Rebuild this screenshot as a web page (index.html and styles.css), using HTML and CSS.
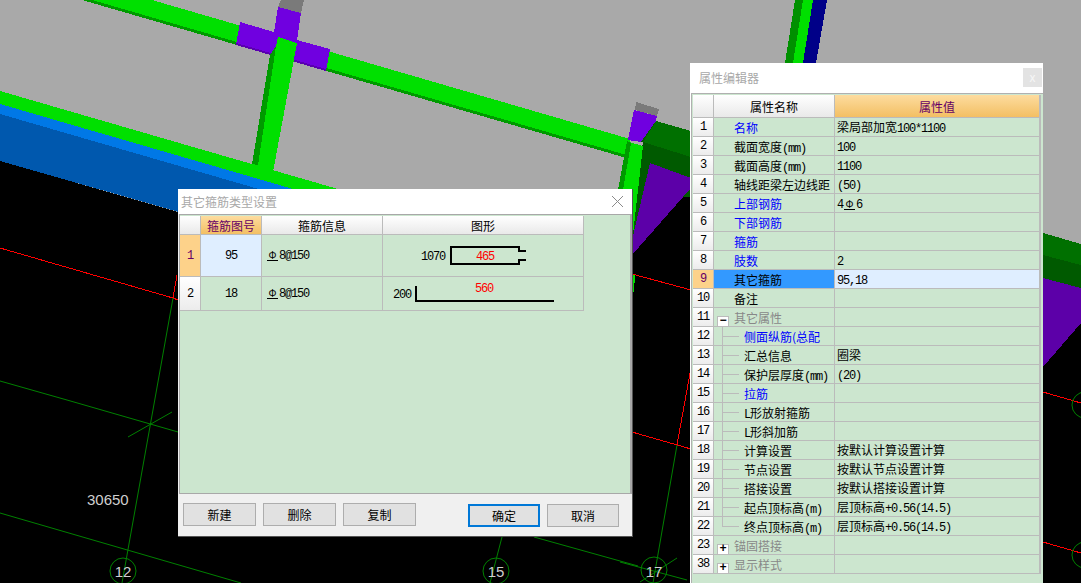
FILE: index.html
```html
<!doctype html>
<html lang="zh-CN">
<head>
  <meta charset="UTF-8">
  <title>属性编辑器</title>
  <link rel="stylesheet" href="styles.css">
</head>
<body>
  <!-- 3D model and axis lines behind the windows -->
  <svg class="scene" viewBox="0 0 1081 583" width="1081" height="583">
    <rect width="1081" height="583" fill="#a9a9a9"/>
    <polygon fill="#000" points="0,161 300,247 632,255 683,197 691,197 1043,367 1081,323 1081,583 0,583"/>
    <polygon fill="#0058ae" points="0,104 400,220 400,275 0,161"/>
    <polygon fill="#0078e6" points="0,104 400,220 400,230 0,114"/>
    <polygon fill="#00e000" points="0,91 400,207 400,220 0,104"/>
    <polygon fill="#00e000" points="152,0 630,139 630,159 82,0"/>
    <polygon fill="#009a00" points="82,0 630,159 630,156 92,0"/>
    <polygon fill="#7a7a7a" points="281,0 304,0 301,13 278,7"/>
    <polygon fill="#7000e0" points="278,7 301,13 297,40 330,49 326,71 236,45 240,22 274,32"/>
    <polygon fill="#5a00b0" points="236,43 326,69 326,71 236,45"/>
    <polygon fill="#00e000" points="278,37 297,43 273,172 252,165"/>
    <polygon fill="#009a00" points="270,55 276,46 258,165 252,164"/>
    <polygon fill="#00e000" points="632,274 635,275 634,292 632,292"/>
    <polygon fill="#009000" points="795,0 803,0 793,63 785,63"/>
    <polygon fill="#00e000" points="803,0 813,0 803,63 793,63"/>
    <polygon fill="#000088" points="813,0 827,0 816,63 803,63"/>
    <polygon fill="#7a7a7a" points="636,102 659,109 657,116 635,110"/>
    <polygon fill="#7000e0" points="634,110 657,116 656,121 641,142 628,140"/>
    <polygon fill="#007000" points="656,121 691,131 691,157 643,142"/>
    <polygon fill="#005a00" points="656,121 643,142 641,142"/>
    <polygon fill="#005a00" points="643,142 691,157 691,178 650,163"/>
    <polygon fill="#005a00" points="643,142 650,163 632,245 632,200"/>
    <polygon fill="#005a00" points="691,188 691,197 683,197"/>
    <polygon fill="#5c00a8" points="650,163 691,178 691,188 683,197 632,255 632,240"/>
    <polygon fill="#00e000" points="629,142 643,146 632,243 620,190"/>
    <polygon fill="#009a00" points="627,141 631,143 623,190 618,190"/>
    <polygon fill="#007000" points="1043,233 1081,244 1081,265 1043,255"/>
    <polygon fill="#005a00" points="1043,255 1081,265 1081,288 1043,278"/>
    <polygon fill="#5c00a8" points="1043,278 1081,288 1081,323 1043,367"/>
    <g class="axis-red">
      <path d="M0 248 173 298 178 300M173 298 177 275"/>
      <path d="M632 274 691 290M632 432 691 449M677 445 691 368"/>
      <path d="M1043 392 1081 403M1043 542 1081 553"/>
    </g>
    <g class="axis-green">
      <path d="M173 298 122 583M67 400 178 432M128 437 172 412M0 381 67 400M0 513 241 583"/>
      <path d="M502 537 490 583M534 537 638 566M620 562 687 580M677 445 653 583M640 582 677 558"/>
      <circle cx="123" cy="571" r="13"/>
      <circle cx="496" cy="571" r="13"/>
      <circle cx="654" cy="570" r="13"/>
      <circle cx="1085" cy="405" r="13"/>
      <circle cx="1085" cy="555" r="13"/>
    </g>
    <g class="axis-text">
      <text x="87" y="505">30650</text>
      <text x="123" y="577" text-anchor="middle">12</text>
      <text x="496" y="577" text-anchor="middle">15</text>
      <text x="654" y="577" text-anchor="middle">17</text>
    </g>
  </svg>

  <!-- stirrup type dialog -->
  <div class="dialog">
    <div class="titlebar">
      <span>其它箍筋类型设置</span>
      <svg class="close-x" width="11" height="11" viewBox="0 0 11 11"><path d="M0 0 11 11M11 0 0 11"/></svg>
    </div>
    <div class="dialog-body">
      <div class="st-row st-head">
        <div class="hcell"></div>
        <div class="hcell active">箍筋图号</div>
        <div class="hcell">箍筋信息</div>
        <div class="hcell">图形</div>
      </div>
      <div class="st-row st-tall">
        <div class="num current"><span class="m">1</span></div>
        <div class="cell center picked"><span class="m">95</span></div>
        <div class="cell"><span class="rebar">Φ</span><span class="m">8@150</span></div>
        <div class="cell shape">
          <svg width="200" height="41" viewBox="0 0 200 41">
            <text class="dim" x="38" y="25">1070</text>
            <path class="bar" d="M143 16H136V12H68V29H136V25H143"/>
            <text class="len" x="102" y="25" text-anchor="middle">465</text>
          </svg>
        </div>
      </div>
      <div class="st-row st-short">
        <div class="num"><span class="m">2</span></div>
        <div class="cell center"><span class="m">18</span></div>
        <div class="cell"><span class="rebar">Φ</span><span class="m">8@150</span></div>
        <div class="cell shape">
          <svg width="200" height="32" viewBox="0 0 200 32">
            <text class="dim" x="10" y="21">200</text>
            <path class="bar" d="M33 9V24H171"/>
            <text class="len" x="101" y="15" text-anchor="middle">560</text>
          </svg>
        </div>
      </div>
    </div>
    <div class="footer">
      <button class="btn">新建</button>
      <button class="btn">删除</button>
      <button class="btn">复制</button>
      <button class="btn btn-ok">确定</button>
      <button class="btn btn-cancel">取消</button>
    </div>
  </div>

  <!-- property editor -->
  <div class="prop-win">
    <div class="titlebar prop-title">
      <span>属性编辑器</span>
      <div class="close-box">x</div>
    </div>
    <div class="prop-body">
      <div class="row row-head">
        <div class="hcell"></div>
        <div class="hcell">属性名称</div>
        <div class="hcell active">属性值</div>
      </div>
      <div class="row"><div class="num"><span class="m">1</span></div><div class="name link">名称</div><div class="val">梁局部加宽<span class="m">100*1100</span></div></div>
      <div class="row"><div class="num"><span class="m">2</span></div><div class="name">截面宽度<span class="m">(mm)</span></div><div class="val"><span class="m">100</span></div></div>
      <div class="row"><div class="num"><span class="m">3</span></div><div class="name">截面高度<span class="m">(mm)</span></div><div class="val"><span class="m">1100</span></div></div>
      <div class="row"><div class="num"><span class="m">4</span></div><div class="name">轴线距梁左边线距</div><div class="val"><span class="m">(50)</span></div></div>
      <div class="row"><div class="num"><span class="m">5</span></div><div class="name link">上部钢筋</div><div class="val"><span class="m">4</span><span class="rebar">Φ</span><span class="m">6</span></div></div>
      <div class="row"><div class="num"><span class="m">6</span></div><div class="name link">下部钢筋</div><div class="val"></div></div>
      <div class="row"><div class="num"><span class="m">7</span></div><div class="name link">箍筋</div><div class="val"></div></div>
      <div class="row"><div class="num"><span class="m">8</span></div><div class="name link">肢数</div><div class="val"><span class="m">2</span></div></div>
      <div class="row row-current"><div class="num current"><span class="m">9</span></div><div class="name">其它箍筋</div><div class="val"><span class="m">95,18</span></div></div>
      <div class="row"><div class="num"><span class="m">10</span></div><div class="name">备注</div><div class="val"></div></div>
      <div class="row"><div class="num"><span class="m">11</span></div><div class="name group"><span class="toggle">−</span>其它属性</div><div class="val"></div></div>
      <div class="row"><div class="num"><span class="m">12</span></div><div class="name tree link">侧面纵筋(总配</div><div class="val"></div></div>
      <div class="row"><div class="num"><span class="m">13</span></div><div class="name tree">汇总信息</div><div class="val">圈梁</div></div>
      <div class="row"><div class="num"><span class="m">14</span></div><div class="name tree">保护层厚度<span class="m">(mm)</span></div><div class="val"><span class="m">(20)</span></div></div>
      <div class="row"><div class="num"><span class="m">15</span></div><div class="name tree link">拉筋</div><div class="val"></div></div>
      <div class="row"><div class="num"><span class="m">16</span></div><div class="name tree"><span class="m">L</span>形放射箍筋</div><div class="val"></div></div>
      <div class="row"><div class="num"><span class="m">17</span></div><div class="name tree"><span class="m">L</span>形斜加筋</div><div class="val"></div></div>
      <div class="row"><div class="num"><span class="m">18</span></div><div class="name tree">计算设置</div><div class="val">按默认计算设置计算</div></div>
      <div class="row"><div class="num"><span class="m">19</span></div><div class="name tree">节点设置</div><div class="val">按默认节点设置计算</div></div>
      <div class="row"><div class="num"><span class="m">20</span></div><div class="name tree">搭接设置</div><div class="val">按默认搭接设置计算</div></div>
      <div class="row"><div class="num"><span class="m">21</span></div><div class="name tree">起点顶标高<span class="m">(m)</span></div><div class="val">层顶标高<span class="m">+0.56(14.5)</span></div></div>
      <div class="row"><div class="num"><span class="m">22</span></div><div class="name tree tree-last">终点顶标高<span class="m">(m)</span></div><div class="val">层顶标高<span class="m">+0.56(14.5)</span></div></div>
      <div class="row"><div class="num"><span class="m">23</span></div><div class="name group"><span class="toggle">+</span>锚固搭接</div><div class="val"></div></div>
      <div class="row"><div class="num"><span class="m">38</span></div><div class="name group"><span class="toggle">+</span>显示样式</div><div class="val"></div></div>
    </div>
  </div>
</body>
</html>
```

FILE: styles.css
```css
body {
  position: relative;
  width: 1081px;
  height: 583px;
  margin: 0;
  overflow: hidden;
  background: #000;
  color: #000;
  font-family: "Noto Sans CJK SC", "Liberation Sans", sans-serif;
  font-size: 12px;
}

/* background drawing */
.scene {
  position: absolute;
  left: 0;
  top: 0;
  shape-rendering: crispEdges;
}
.axis-red path {
  fill: none;
  stroke: #f00;
}
.axis-green path,
.axis-green circle {
  fill: none;
  stroke: #008000;
  shape-rendering: auto;
}
.axis-text text {
  fill: #cfcfcf;
  font-family: "Liberation Sans", sans-serif;
  font-size: 15px;
}

/* latin text runs sit on a 6px grid like the CJK half width */
.m {
  font-family: "Liberation Mono", monospace;
  font-size: 12px;
  letter-spacing: -1.2px;
}
.rebar {
  display: inline-block;
  width: 11px;
  margin: 0 1px;
  border-bottom: 1px solid #000;
  font-family: "Liberation Sans", sans-serif;
  font-size: 10px;
  line-height: 9px;
  text-align: center;
}

/* shared window parts */
.titlebar {
  display: flex;
  align-items: center;
  justify-content: space-between;
  color: #a8a8a8;
}
.hcell {
  display: flex;
  align-items: center;
  justify-content: center;
  border-right: 1px solid #bbb;
  border-bottom: 1px solid #bbb;
  background: linear-gradient(#fff, #e9e9e9);
}
.hcell.active {
  background: linear-gradient(#fddc9f, #f3bf63);
  color: #660066;
}
.num {
  display: flex;
  align-items: center;
  justify-content: center;
  border-right: 1px solid #bbb;
  border-bottom: 1px solid #bbb;
  background: linear-gradient(#fff, #ececec);
}
.num.current {
  background: #fdd28a;
  color: #660066;
}

/* stirrup dialog */
.dialog {
  position: absolute;
  left: 178px;
  top: 189px;
  display: flex;
  flex-direction: column;
  box-sizing: border-box;
  width: 455px;
  height: 348px;
  border-right: 1px solid #555;
  border-bottom: 1px solid #555;
  background: #f0f0f0;
}
.dialog .titlebar {
  flex: none;
  height: 25px;
  padding: 0 9px 0 3px;
  background: #fff;
}
.close-x path {
  fill: none;
  stroke: #8a8a8a;
}
.dialog-body {
  flex: none;
  height: 277px;
  margin-left: 1px;
  border: 1px solid #a8a8a8;
  border-right: 2px solid #a8a8a8;
  padding-top: 1px;
  background: #cce6cf;
}
.st-row {
  display: grid;
  grid-template-columns: 21px 61px 121px 201px;
}
.st-head {
  height: 19px;
}
.st-tall {
  height: 42px;
}
.st-short {
  height: 34px;
}
.cell {
  display: flex;
  align-items: center;
  padding-left: 4px;
  border-right: 1px solid #bbb;
  border-bottom: 1px solid #bbb;
}
.cell.center {
  justify-content: center;
  padding-left: 0;
}
.cell.picked {
  background: #dfeeff;
}
.cell.shape {
  align-items: flex-start;
  padding-left: 0;
}
.shape svg {
  display: block;
}
.shape text {
  font-family: "Liberation Mono", monospace;
  font-size: 12px;
  letter-spacing: -1.2px;
}
.shape .len {
  fill: #f00;
}
.shape .bar {
  fill: none;
  stroke: #000;
  stroke-width: 2;
  shape-rendering: crispEdges;
}
.footer {
  display: flex;
  align-items: flex-start;
  gap: 7px;
  padding: 9px 0 0 5px;
}
.btn {
  box-sizing: border-box;
  width: 73px;
  height: 23px;
  padding: 0;
  border: 1px solid #adadad;
  border-radius: 0;
  background: #e1e1e1;
  color: #000;
  font: inherit;
}
.btn-ok {
  width: 72px;
  margin: 1px 0 0 45px;
  border: 2px solid #0078d7;
}
.btn-cancel {
  width: 72px;
  margin-top: 1px;
}

/* property editor */
.prop-win {
  position: absolute;
  left: 690px;
  top: 63px;
  box-sizing: border-box;
  width: 353px;
  height: 520px;
  background: #fff;
}
.prop-title {
  box-sizing: border-box;
  height: 30px;
  padding: 0 1px 2px 9px;
}
.close-box {
  width: 19px;
  height: 19px;
  background: #e3e3e3;
  color: #f6f6f6;
  line-height: 17px;
  text-align: center;
}
.prop-body {
  box-sizing: border-box;
  height: 490px;
  margin-left: 1px;
  border-top: 1px solid #b0b0b0;
  border-left: 1px solid #b0b0b0;
  padding: 1px 0 0 1px;
  background: #cce6cf;
}
.row {
  display: grid;
  grid-template-columns: 21px 121px 206px;
  height: 19px;
}
.row-head {
  height: 23px;
}
.row .hcell:last-child,
.row .val {
  border-right: 2px solid #bbb;
}
.name,
.val {
  white-space: nowrap;
  overflow: hidden;
  border-right: 1px solid #bbb;
  border-bottom: 1px solid #bbb;
}
.name {
  padding-left: 20px;
  line-height: 20px;
}
.val {
  padding-left: 2px;
  line-height: 18px;
}
.link {
  color: #00f;
}
.group {
  color: #888;
}
.row-current .name {
  background: #3399ff;
}
.row-current .val {
  background: #dfeeff;
}
.toggle {
  display: inline-block;
  box-sizing: border-box;
  width: 12px;
  height: 12px;
  margin: 0 5px 0 -17px;
  border: 1px solid #bbb;
  background: #fff;
  color: #000;
  font-family: "Liberation Mono", monospace;
  font-size: 12px;
  font-weight: bold;
  line-height: 9px;
  text-align: center;
  vertical-align: -1px;
}
.tree {
  padding-left: 30px;
  background:
    linear-gradient(#bbb, #bbb) 8px 0 / 1px 100% no-repeat,
    linear-gradient(#bbb, #bbb) 8px 9px / 17px 1px no-repeat;
}
.tree-last {
  background:
    linear-gradient(#bbb, #bbb) 8px 0 / 1px 10px no-repeat,
    linear-gradient(#bbb, #bbb) 8px 9px / 17px 1px no-repeat;
}
```
